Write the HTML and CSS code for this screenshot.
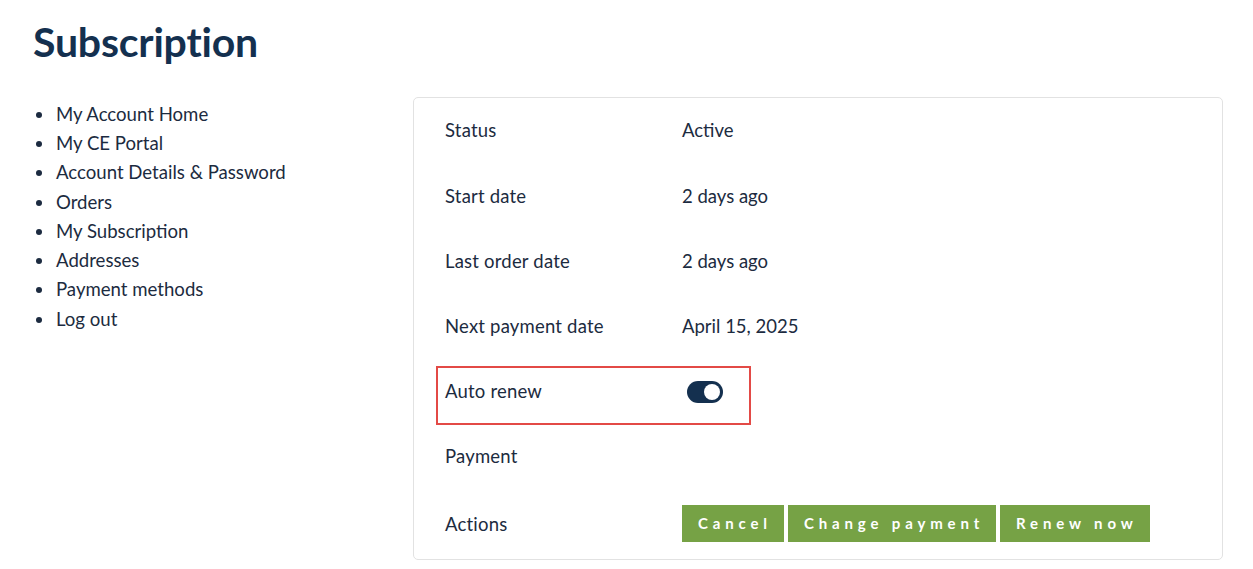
FILE: index.html
```html
<!DOCTYPE html>
<html lang="en">
<head>
    <meta charset="UTF-8">
    <title>Subscription</title>
    <link rel="stylesheet" href="styles.css">
</head>
<body>
<div class="page">
    <h1 class="page-title">Subscription</h1>
    <div class="account">
        <ul class="account-nav">
            <li><a href="javascript:;">My Account Home</a></li>
            <li><a href="javascript:;">My CE Portal</a></li>
            <li><a href="javascript:;">Account Details &amp; Password</a></li>
            <li><a href="javascript:;">Orders</a></li>
            <li><a href="javascript:;">My Subscription</a></li>
            <li><a href="javascript:;">Addresses</a></li>
            <li><a href="javascript:;">Payment methods</a></li>
            <li><a href="javascript:;">Log out</a></li>
        </ul>
        <div class="sub-card">
            <div class="sub-row">
                <div class="sub-label">Status</div>
                <div class="sub-value">Active</div>
            </div>
            <div class="sub-row">
                <div class="sub-label">Start date</div>
                <div class="sub-value">2 days ago</div>
            </div>
            <div class="sub-row">
                <div class="sub-label">Last order date</div>
                <div class="sub-value">2 days ago</div>
            </div>
            <div class="sub-row">
                <div class="sub-label">Next payment date</div>
                <div class="sub-value">April 15, 2025</div>
            </div>
            <div class="sub-row highlighted">
                <div class="sub-label">Auto renew</div>
                <div class="sub-value">
                    <span class="toggle on"><span class="knob"></span></span>
                </div>
                <span class="mark"></span>
            </div>
            <div class="sub-row">
                <div class="sub-label">Payment</div>
                <div class="sub-value"></div>
            </div>
            <div class="sub-row actions">
                <div class="sub-label">Actions</div>
                <div class="sub-value buttons">
                    <a href="javascript:;" class="btn">Cancel</a>
                    <a href="javascript:;" class="btn">Change payment</a>
                    <a href="javascript:;" class="btn">Renew now</a>
                </div>
            </div>
        </div>
    </div>
</div>
</body>
</html>
```

FILE: styles.css
```css
* {
    margin: 0;
    padding: 0;
    box-sizing: border-box;
}

body {
    font-family: "Lato", "Liberation Sans", sans-serif;
    color: #1c2b40;
    background: #fff;
}

.page {
    padding: 14px 30px 0 33px;
}

.page-title {
    font-size: 41px;
    line-height: 56px;
    font-weight: 700;
    color: #14304f;
    letter-spacing: -0.2px;
}

.account {
    display: flex;
    margin-top: 27px;
}

.account-nav {
    width: 380px;
    flex-shrink: 0;
    padding: 2px 0 0 3px;
    font-size: 18.6px;
    list-style: none;
}

.account-nav li {
    display: flex;
    align-items: center;
    height: 29.3px;
}

.account-nav li::before {
    content: "";
    width: 6px;
    height: 6px;
    margin: 2px 14px 0 0;
    border-radius: 50%;
    background: #1c2b40;
}

.account-nav a {
    color: #1c2b40;
    text-decoration: none;
}

.sub-card {
    flex: 1;
    border: 1px solid #e2e2e2;
    border-radius: 5px;
    padding: 0 31px;
}

.sub-row {
    display: flex;
    align-items: center;
    height: 65px;
    font-size: 18.5px;
    position: relative;
}

.sub-row:first-child {
    padding-bottom: 2px;
}

.sub-row.actions {
    height: 71px;
}

.sub-label {
    width: 237px;
    flex-shrink: 0;
    letter-spacing: 0.2px;
}

.sub-value {
    flex: 1;
}

.toggle {
    display: inline-block;
    width: 36px;
    height: 22px;
    border-radius: 11px;
    background: #14304f;
    position: relative;
    margin-left: 5px;
    vertical-align: middle;
}

.toggle .knob {
    position: absolute;
    top: 3px;
    right: 3px;
    width: 16px;
    height: 16px;
    border-radius: 50%;
    background: #fff;
}

.mark {
    position: absolute;
    left: -9px;
    top: 8px;
    width: 315px;
    height: 59px;
    border: 2px solid #e34a46;
}

.buttons {
    display: flex;
    gap: 4px;
}

.btn {
    display: block;
    height: 37px;
    line-height: 37px;
    padding: 0 12px 0 16px;
    background: #76a245;
    color: #fff;
    font-size: 15px;
    font-weight: 700;
    letter-spacing: 4.85px;
    text-decoration: none;
}
```
